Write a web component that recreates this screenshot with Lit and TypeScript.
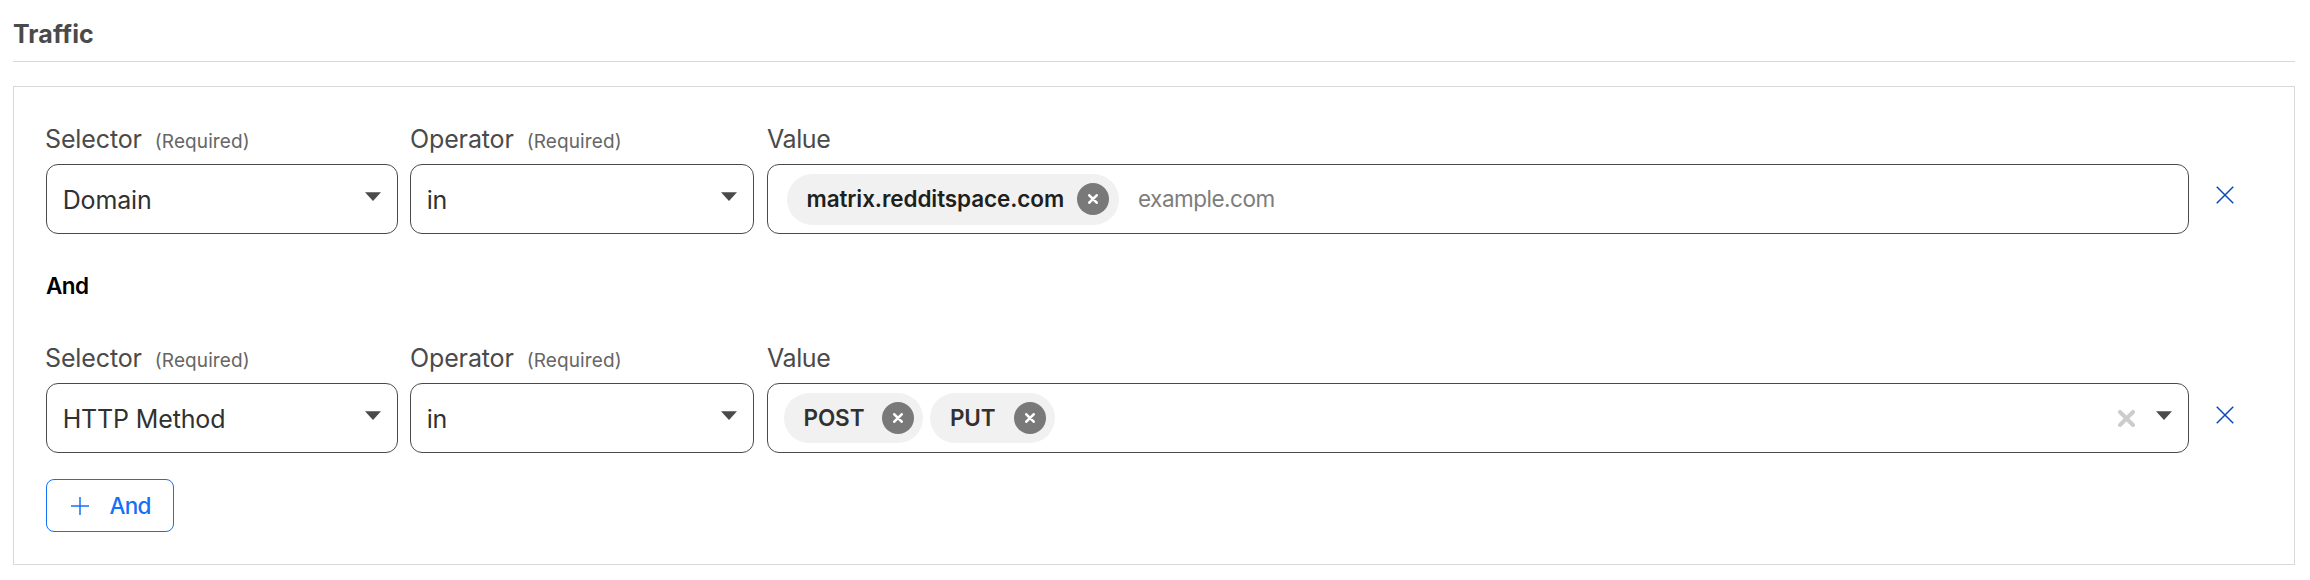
import { LitElement, html, css, svg, nothing } from "lit";
import { customElement, property } from "lit/decorators.js";
import { classMap } from "lit/directives/class-map.js";

type Rule = {
  selector: string;
  operator: string;
  values: string[];
  kind: "input" | "multi";
};

const RULES: Rule[] = [
  { selector: "Domain", operator: "in", values: ["matrix.redditspace.com"], kind: "input" },
  { selector: "HTTP Method", operator: "in", values: ["POST", "PUT"], kind: "multi" },
];

const base = css`
  * {
    box-sizing: border-box;
  }
  svg {
    display: block;
    flex: none;
  }
`;

const caret = html`<svg width="16" height="9" viewBox="0 0 16 9">
  <path d="M0 0.3H16L8 9Z" fill="#4a4a4a" />
</svg>`;

const cross = (size: number, width: number, colour: string, round = false) => {
  const a = width / 2;
  const b = size - a;
  return html`<svg width=${size} height=${size} viewBox="0 0 ${size} ${size}">
    ${svg`<path d="M${a} ${a}L${b} ${b}M${b} ${a}L${a} ${b}" fill="none" stroke=${colour}
      stroke-width=${width} stroke-linecap=${round ? "round" : "butt"} />`}
  </svg>`;
};

@customElement("field-label")
class FieldLabel extends LitElement {
  @property() text = "";
  @property({ type: Boolean }) required = false;

  static styles = [
    base,
    css`
      :host {
        display: flex;
        align-items: baseline;
        gap: 13px;
        height: 30px;
        margin-bottom: 10px;
        font-size: 25px;
        line-height: 30px;
        letter-spacing: -0.13px;
        color: #4a4a4a;
        white-space: nowrap;
      }
      .tight {
        letter-spacing: -0.4px;
      }
      .hint {
        font-size: 19px;
        letter-spacing: 0.1px;
        color: #666;
      }
    `,
  ];

  render() {
    return html`<span class=${classMap({ tight: !this.required })}>${this.text}</span>
      ${this.required ? html`<span class="hint">(Required)</span>` : nothing}`;
  }
}

@customElement("select-box")
class SelectBox extends LitElement {
  @property() value = "";

  static styles = [
    base,
    css`
      :host {
        display: flex;
        align-items: center;
        justify-content: space-between;
        box-sizing: border-box;
        height: 70px;
        padding: 0 16px 0 15.7px;
        border: 1px solid #4a4a4a;
        border-radius: 12px;
        background: #fff;
      }
      .value {
        padding-top: 2px;
        font-size: 25px;
        line-height: 30px;
        letter-spacing: -0.15px;
        color: #313131;
      }
      svg {
        margin-bottom: 5px;
      }
    `,
  ];

  render() {
    return html`<span class="value">${this.value}</span>${caret}`;
  }
}

@customElement("value-box")
class ValueBox extends LitElement {
  @property({ attribute: false }) values: string[] = [];
  @property() kind: Rule["kind"] = "input";

  static styles = [
    base,
    css`
      :host {
        display: block;
      }
      .box {
        display: flex;
        align-items: center;
        height: 70px;
        padding: 0 16px 0 19px;
        border: 1px solid #4a4a4a;
        border-radius: 12px;
        background: #fff;
        font-size: 22.5px;
        line-height: 28px;
      }
      .multi {
        padding-left: 16px;
      }
      .chip {
        display: flex;
        align-items: center;
        justify-content: space-between;
        height: 51px;
        width: 332px;
        padding: 0 10px 0 19.5px;
        border-radius: 26px;
        background: #f1f1f1;
        color: #1d1f20;
        font-weight: 600;
        letter-spacing: -0.1px;
      }
      .multi .chip {
        height: 50px;
        width: auto;
        gap: 18px;
        margin-right: 7px;
        padding: 0 9px 0 19.5px;
        color: #313131;
      }
      .remove {
        display: grid;
        place-items: center;
        width: 32px;
        height: 32px;
        border-radius: 50%;
        background: #797979;
      }
      .placeholder {
        margin-left: 19px;
        letter-spacing: -0.5px;
        color: #7d7d7d;
      }
      .tools {
        display: flex;
        align-items: center;
        gap: 21px;
        margin-left: auto;
      }
      .caret {
        margin-bottom: 5px;
      }
    `,
  ];

  render() {
    return html`<div class=${classMap({ box: true, multi: this.kind === "multi" })}>
      ${this.values.map(
        (v) => html`<div class="chip"><span>${v}</span><span class="remove">${cross(10, 2.6, "#fff", true)}</span></div>`
      )}
      ${this.kind === "input"
        ? html`<span class="placeholder">example.com</span>`
        : html`<div class="tools">${cross(17, 4, "#ccc", true)}<div class="caret">${caret}</div></div>`}
    </div>`;
  }
}

@customElement("rule-row")
class RuleRow extends LitElement {
  @property({ attribute: false }) rule!: Rule;

  static styles = [
    base,
    css`
      :host {
        display: grid;
        grid-template-columns: 352px 344px 1423px 34px;
        column-gap: 12px;
        height: 110px;
      }
      .selector field-label {
        margin-left: -1px;
      }
      .value {
        margin-left: 1px;
      }
      .delete {
        padding: 62px 0 0 15px;
      }
      .delete.multi {
        padding-top: 63px;
      }
    `,
  ];

  render() {
    const r = this.rule;
    return html`
      <div class="selector">
        <field-label text="Selector" required></field-label>
        <select-box .value=${r.selector}></select-box>
      </div>
      <div>
        <field-label text="Operator" required></field-label>
        <select-box .value=${r.operator}></select-box>
      </div>
      <div class="value">
        <field-label text="Value"></field-label>
        <value-box .values=${r.values} .kind=${r.kind}></value-box>
      </div>
      <div class=${classMap({ delete: true, multi: r.kind === "multi" })}>${cross(18, 1.5, "#0a48b3")}</div>
    `;
  }
}

@customElement("app-root")
class AppRoot extends LitElement {
  static styles = [
    base,
    css`
      :host {
        display: block;
        height: 580px;
        padding: 19px 15px 0 13px;
        box-sizing: border-box;
        background: #fff;
        font-family: Inter, "Liberation Sans", sans-serif;
      }
      .title {
        height: 43px;
        margin: 0 0 24px;
        border-bottom: 1px solid #d9d9d9;
        font-size: 25px;
        font-weight: 700;
        line-height: 30px;
        letter-spacing: 0.1px;
        color: #4a4a4a;
      }
      .panel {
        height: 479px;
        padding: 37px 32px 0;
        border: 1px solid #d9d9d9;
      }
      .joiner {
        margin: 38px 0 43px;
        font-size: 22.5px;
        font-weight: 600;
        line-height: 28px;
        letter-spacing: -0.6px;
        color: #000;
      }
      .add {
        display: flex;
        align-items: center;
        gap: 21px;
        width: 128px;
        height: 53px;
        margin-top: 26px;
        padding: 0 0 0 23.5px;
        border: 1px solid #1670f7;
        border-radius: 8px;
        background: #fff;
        font: 500 22.5px/28px Inter, "Liberation Sans", sans-serif;
        letter-spacing: -0.8px;
        color: #1670f7;
      }
    `,
  ];

  render() {
    return html`
      <h2 class="title">Traffic</h2>
      <section class="panel">
        ${RULES.map(
          (rule, i) => html`${i ? html`<div class="joiner">And</div>` : nothing}<rule-row .rule=${rule}></rule-row>`
        )}
        <button class="add">
          <svg width="18" height="18" viewBox="0 0 18 18">
            <path d="M9 0V18M0 9H18" fill="none" stroke="#1670f7" stroke-width="1.5" />
          </svg>
          And
        </button>
      </section>
    `;
  }
}
